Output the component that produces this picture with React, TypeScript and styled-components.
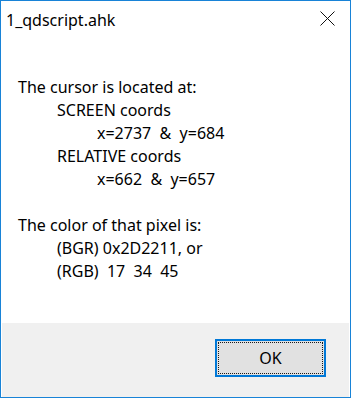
import React from "react";
import styled, { createGlobalStyle } from "styled-components";

const Global = createGlobalStyle`
  html, body { margin: 0; padding: 0; background: #ffffff; }
  body { font-family: "Noto Sans", "Open Sans", sans-serif; }
`;

const Window = styled.div`
  box-sizing: border-box;
  width: 351px;
  height: 398px;
  border: 1px solid #1883d7;
  background: #ffffff;
  display: flex;
  flex-direction: column;
  font-family: "Noto Sans", "Open Sans", sans-serif;
  font-size: 16px;
  color: #000000;
`;

const TitleBar = styled.div`
  height: 38px;
  display: flex;
  align-items: center;
  justify-content: space-between;
  padding: 0 15px 0 5px;
`;

const Title = styled.span`
  line-height: 20px;
  font-size: 16px;
`;

const CloseButton = styled.div`
  width: 15px;
  height: 15px;
  display: flex;
  margin-top: -3px;
`;

const Content = styled.div`
  flex: 1;
  padding: 37px 0 0 17px;
`;

const Line = styled.div<{ $indent: number }>`
  height: 23px;
  line-height: 23px;
  white-space: pre;
  padding-left: ${(p) => p.$indent}px;
`;

const Footer = styled.div`
  height: 74px;
  margin: 0 1px 0 1px;
  background: #f0f0f0;
  display: flex;
  justify-content: flex-end;
  align-items: flex-start;
  padding: 16px 23px 0 0;
  box-sizing: border-box;
`;

const OkButton = styled.button`
  position: relative;
  box-sizing: border-box;
  width: 111px;
  height: 38px;
  border: 2px solid #0078d7;
  background: #e1e1e1;
  font-family: "Noto Sans", "Open Sans", sans-serif;
  font-size: 16px;
  color: #000000;
  padding: 0;
  &::after {
    content: "";
    position: absolute;
    inset: 1px;
    border: 1px dotted #1a1a1a;
  }
`;

const lines: { text: string; indent: number }[] = [
  { text: "The cursor is located at:", indent: 0 },
  { text: "SCREEN coords", indent: 39 },
  { text: "x=2737  &  y=684", indent: 79 },
  { text: "RELATIVE coords", indent: 39 },
  { text: "x=662  &  y=657", indent: 79 },
  { text: " ", indent: 0 },
  { text: "The color of that pixel is:", indent: 0 },
  { text: "(BGR) 0x2D2211, or", indent: 39 },
  { text: "(RGB)  17  34  45", indent: 39 },
];

export default function App() {
  return (
    <>
      <Global />
      <Window>
        <TitleBar>
          <Title>1_qdscript.ahk</Title>
          <CloseButton>
            <svg width="15" height="15" viewBox="0 0 15 15">
              <path d="M0.5 0.5 L14.5 14.5 M14.5 0.5 L0.5 14.5" stroke="#111" strokeWidth="1" fill="none" />
            </svg>
          </CloseButton>
        </TitleBar>
        <Content>
          {lines.map((l, i) => (
            <Line key={i} $indent={l.indent}>
              {l.text}
            </Line>
          ))}
        </Content>
        <Footer>
          <OkButton>OK</OkButton>
        </Footer>
      </Window>
    </>
  );
}
